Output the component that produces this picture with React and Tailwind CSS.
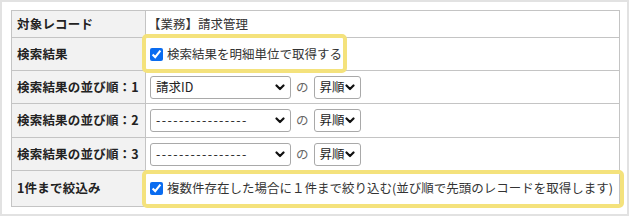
import React from "react";

const font = { fontFamily: '"Noto Sans CJK JP", "Noto Sans", sans-serif' };

function Chevron() {
  return (
    <svg width="10" height="7" viewBox="0 0 10 7" className="shrink-0">
      <path d="M1.5 1.5 L5 5 L8.5 1.5" fill="none" stroke="#111" strokeWidth="2.2" strokeLinecap="round" strokeLinejoin="round" />
    </svg>
  );
}

function Select({ value, width, dashes }) {
  return (
    <div
      className="flex items-center justify-between h-[23px] border border-[#a9a9a9] rounded-[3px] bg-white pl-[5px] pr-[5px]"
      style={{ width }}
    >
      <span className={dashes ? "text-[12.5px] leading-none text-[#222] whitespace-nowrap tracking-[1.4px]" : "text-[12.5px] leading-none text-[#222] whitespace-nowrap"}>{value}</span>
      <Chevron />
    </div>
  );
}

function SortRow({ label, value, h, dashes }) {
  return (
    <tr className={h}>
      <td className="border border-[#c4c4c4] bg-[#f2f2f2] pl-[5px] font-bold text-[12.5px] text-[#222] whitespace-nowrap tracking-[0.2px]">{label}</td>
      <td className="border border-[#c4c4c4] pl-[4px]">
        <div className="flex items-center gap-[5px]">
          <Select value={value} width="141px" dashes={dashes} />
          <span className="text-[12.5px] text-[#666]">の</span>
          <Select value="昇順" width="47px" />
        </div>
      </td>
    </tr>
  );
}

export default function App() {
  return (
    <div className="w-[629px] h-[216px] bg-white" style={font}>
      <div className="relative w-[629px] h-[216px] border-2 border-[#e2e2e2] pl-[9px] pt-[8px]">
        <table className="w-[609px] border-collapse border border-[#b8b8b8] text-[#222]">
          <tbody>
            <tr className="h-[27px]">
              <td className="w-[134px] border border-[#c4c4c4] bg-[#f2f2f2] pl-[5px] font-bold text-[12.5px] whitespace-nowrap tracking-[0.2px]">対象レコード</td>
              <td className="border border-[#c4c4c4] pl-[2px] text-[12.5px] text-[#333]">【業務】請求管理</td>
            </tr>
            <tr className="h-[33px]">
              <td className="border border-[#c4c4c4] bg-[#f2f2f2] pl-[5px] font-bold text-[12.5px] tracking-[0.2px]">検索結果</td>
              <td className="border border-[#c4c4c4] pl-[4px]">
                <label className="flex items-center gap-[4px] text-[12.5px] text-[#333]">
                  <input type="checkbox" defaultChecked className="w-[13px] h-[13px] m-0 accent-[#0a6cf0]" />
                  <span>検索結果を明細単位で取得する</span>
                </label>
              </td>
            </tr>
            <SortRow label="検索結果の並び順：1" value="請求ID" h="h-[33px]" />
            <SortRow label="検索結果の並び順：2" value="----------------" h="h-[34px]" dashes />
            <SortRow label="検索結果の並び順：3" value="----------------" h="h-[33px]" dashes />
            <tr className="h-[36px]">
              <td className="border border-[#c4c4c4] bg-[#f2f2f2] pl-[5px] font-bold text-[12.5px] tracking-[0.2px]">1件まで絞込み</td>
              <td className="border border-[#c4c4c4] pl-[4px]">
                <label className="flex items-center gap-[4px] text-[12.5px] whitespace-nowrap text-[#333]">
                  <input type="checkbox" defaultChecked className="w-[13px] h-[13px] m-0 accent-[#0a6cf0]" />
                  <span>複数件存在した場合に１件まで絞り込む(並び順で先頭のレコードを取得します)</span>
                </label>
              </td>
            </tr>
          </tbody>
        </table>
        <div className="absolute left-[140px] top-[32px] w-[205px] h-[39px] border-4 border-[#f4e27c] rounded-[5px] pointer-events-none" />
        <div className="absolute left-[140px] top-[168px] w-[482px] h-[38px] border-4 border-[#f4e27c] rounded-[5px] pointer-events-none" />
      </div>
    </div>
  );
}
